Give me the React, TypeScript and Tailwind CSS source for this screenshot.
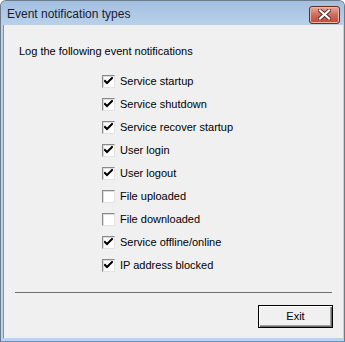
import React from "react";

const items = [
  { label: "Service startup", checked: true },
  { label: "Service shutdown", checked: true },
  { label: "Service recover startup", checked: true },
  { label: "User login", checked: true },
  { label: "User logout", checked: true },
  { label: "File uploaded", checked: false },
  { label: "File downloaded", checked: false },
  { label: "Service offline/online", checked: true },
  { label: "IP address blocked", checked: true },
];

function CheckBox({ checked }: { checked: boolean }) {
  return (
    <div className="w-[13px] h-[13px] bg-white border-t border-l border-[#8a8a8a] border-r border-b border-r-[#e3e3e3] border-b-[#e3e3e3] shadow-[inset_1px_1px_0_#dcdcdc] flex items-center justify-center">
      {checked && (
        <svg width="9" height="9" viewBox="0 0 9 9">
          <path d="M1 4 L3 6 L8 1" fill="none" stroke="#000" strokeWidth="2" strokeLinecap="square" />
        </svg>
      )}
    </div>
  );
}

export default function App() {
  return (
    <div
      className="w-[345px] h-[342px] flex flex-col bg-[#bcd3ec] border border-[#6d7a89] border-b-[#2fa9e2] rounded-t-[6px] overflow-hidden"
      style={{ fontFamily: '"Liberation Sans", Arial, sans-serif' }}
    >
      {/* title bar */}
      <div className="h-[24px] shrink-0 flex items-center justify-between pl-[6px] pr-[4px] bg-gradient-to-b from-[#a3bfe0] to-[#b9d1ea]">
        <span className="text-[12px] text-[#1c1a33] leading-none mt-[1px]">Event notification types</span>
        <div className="w-[31px] h-[18px] mt-[3px] rounded-[3px] border border-[#6b2a22] bg-gradient-to-b from-[#e6aa9f] via-[#cf6a5b] to-[#c24834] shadow-[inset_0_0_0_1px_#eab7ad] flex items-center justify-center">
          <svg width="13" height="11" viewBox="0 0 13 11">
            <path d="M2 1.5 L11 9.5 M11 1.5 L2 9.5" stroke="#5a2a26" strokeWidth="4" strokeLinecap="square" />
            <path d="M2 1.5 L11 9.5 M11 1.5 L2 9.5" stroke="#fff" strokeWidth="2.2" strokeLinecap="square" />
          </svg>
        </div>
      </div>

      {/* client area */}
      <div className="flex-1 ml-[2px] mr-[1px] mb-[3px] bg-[#f0f0f0] border-l border-[#4b9fd8] flex flex-col text-[11px] text-black leading-[13px]">
        <div className="pl-[15px] pt-[20px]">Log the following event notifications</div>

        <div className="flex flex-col pl-[98px] mt-[12px]">
          {items.map((item) => (
            <div key={item.label} className="h-[23px] flex items-center gap-[5px]">
              <CheckBox checked={item.checked} />
              <span>{item.label}</span>
            </div>
          ))}
        </div>

        <div className="mx-[11px] mt-[15px] h-px bg-[#6e6e6e]" />

        <div className="flex justify-end pr-[10px] mt-[12px]">
          <button className="w-[75px] h-[23px] border border-black bg-[#f0f0f0] shadow-[inset_1px_1px_0_#ffffff,inset_-1px_-1px_0_#696969,inset_-2px_-2px_0_#a0a0a0] text-[11px] leading-none">
            Exit
          </button>
        </div>
      </div>
    </div>
  );
}
